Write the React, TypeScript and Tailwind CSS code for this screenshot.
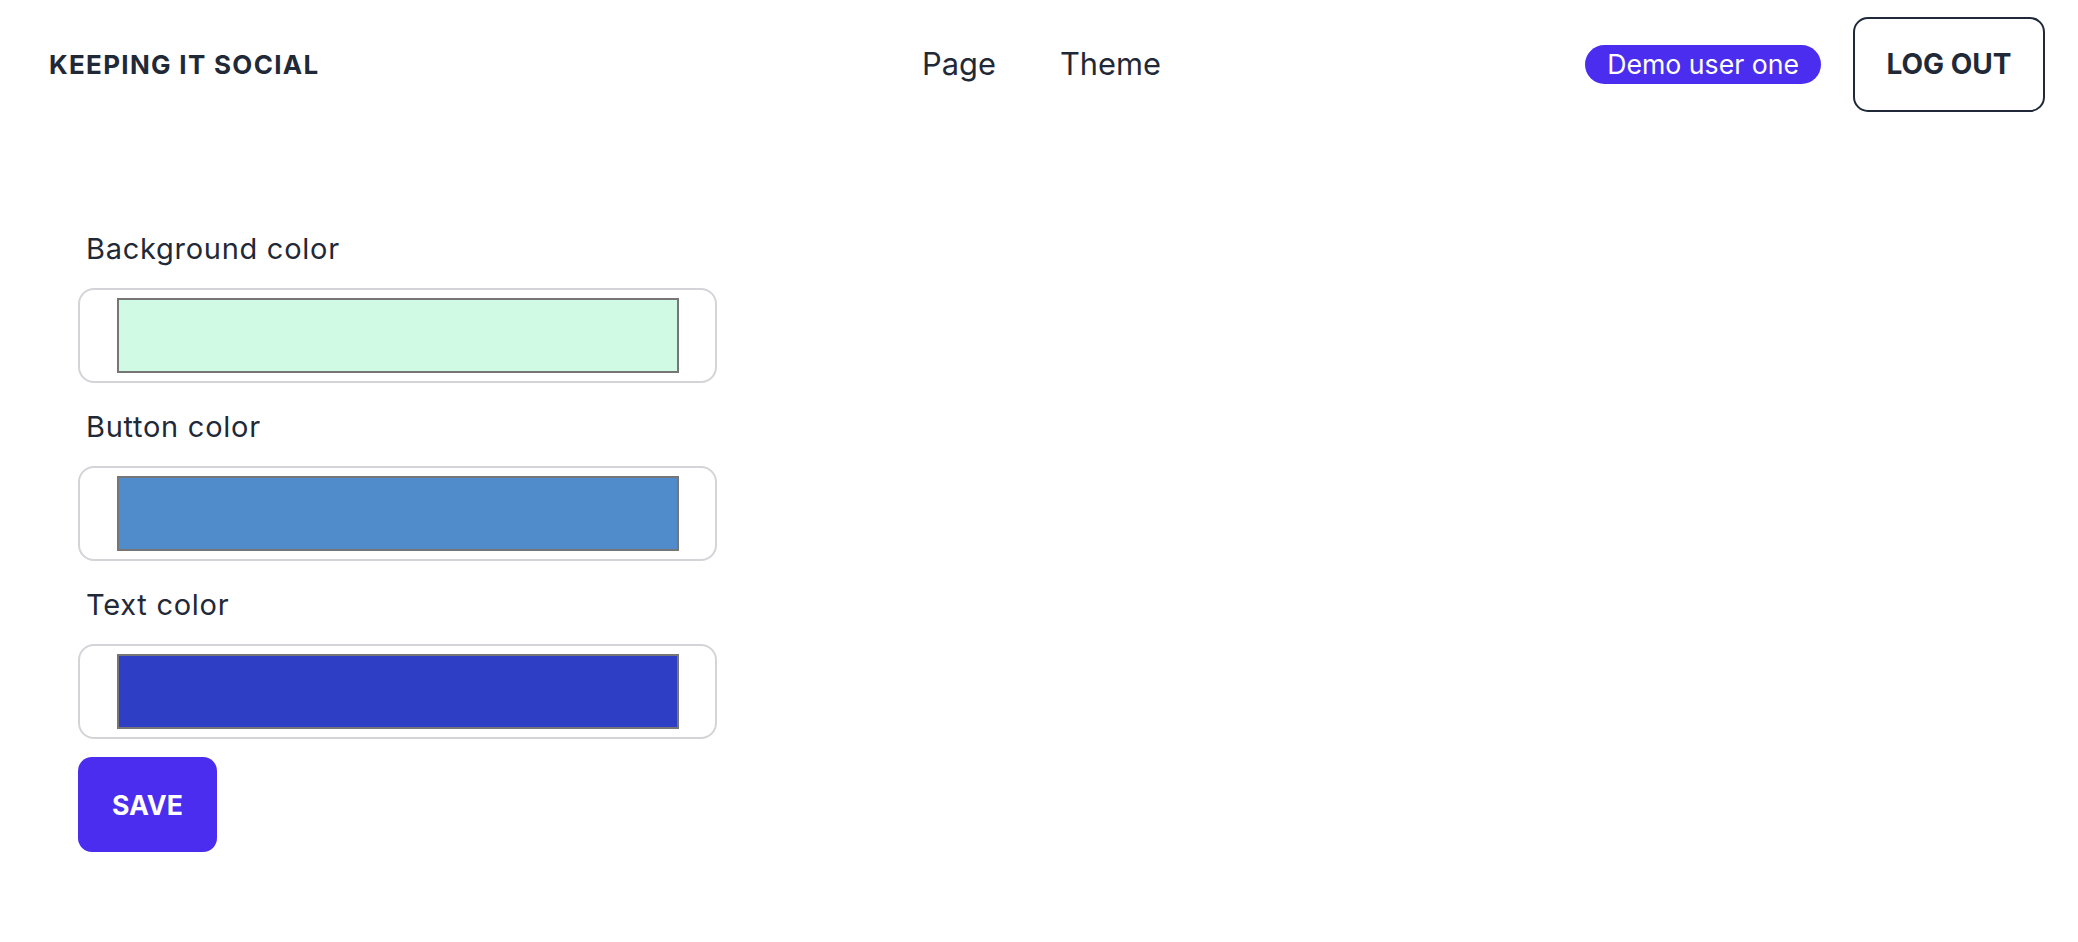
import React from "react";

const font = { fontFamily: "Inter, 'Noto Sans', sans-serif" };

function ColorField({ label, color }: { label: string; color: string }) {
  return (
    <div className="flex flex-col">
      <label className="pl-2 text-[29px] tracking-[0.025em] leading-[40px] text-[#1f2937] mb-[19px]">{label}</label>
      <div className="w-[639px] h-[95px] border-2 border-[#d4d4d8] rounded-2xl flex items-center pl-[37px] bg-white">
        <div className="w-[562px] h-[75px] border-2 border-[#767676]" style={{ backgroundColor: color }} />
      </div>
    </div>
  );
}

export default function App() {
  return (
    <div className="min-h-screen bg-white text-[#1f2937]" style={font}>
      <header className="grid grid-cols-3 items-center h-[128px] px-[33px]">
        <div className="pl-[16px] text-[26px] tracking-[0.05em] font-bold">KEEPING IT SOCIAL</div>
        <nav className="flex justify-center items-center gap-[64px] pl-[5px] text-[30.8px]">
          <a>Page</a>
          <a>Theme</a>
        </nav>
        <div className="flex justify-end items-center gap-[32px]">
          <span className="h-[39px] px-[22px] rounded-full bg-[#4b2df0] text-white text-[26.67px] leading-[39px]">Demo user one</span>
          <button className="w-[192px] h-[95px] border-2 border-[#1f2937] rounded-[15px] text-[28px] font-bold">LOG OUT</button>
        </div>
      </header>
      <main className="pt-[101px] pl-[78px] flex flex-col gap-[24px]">
        <ColorField label="Background color" color="#d1fae5" />
        <ColorField label="Button color" color="#508ccc" />
        <ColorField label="Text color" color="#2e3fc6" />
      </main>
      <div className="pl-[78px] mt-[18px]">
        <button className="w-[139px] h-[95px] rounded-[14px] bg-[#4b2df0] text-white text-[26.67px] font-bold">SAVE</button>
      </div>
    </div>
  );
}
